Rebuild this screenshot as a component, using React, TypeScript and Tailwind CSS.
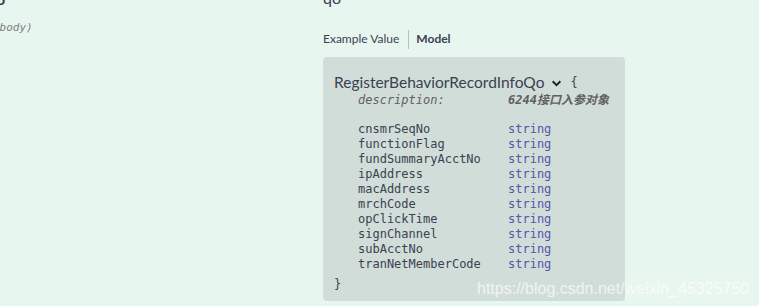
import type { FC } from 'react';

const props = [
  'cnsmrSeqNo',
  'functionFlag',
  'fundSummaryAcctNo',
  'ipAddress',
  'macAddress',
  'mrchCode',
  'opClickTime',
  'signChannel',
  'subAcctNo',
  'tranNetMemberCode',
];

const mono = "font-['DejaVu_Sans_Mono','Liberation_Mono',monospace]";

const App: FC = () => (
  <div className="relative flex h-[306px] w-[759px] overflow-hidden bg-[#e8f6f0] font-['Lato',sans-serif] text-[#3b4151]">
    {/* left: parameter name column */}
    <div className="w-[323px] shrink-0">
      <div className="-ml-[4px] -mt-[10px] flex items-start gap-[26px]">
        <span className="text-[16px] font-bold leading-[18px] text-[#3b4151]">o</span>
        <span className="-mt-[2px] text-[10px] leading-[14px] text-[#ff6060]">*</span>
      </div>
      <div className={`-ml-[7px] mt-[12px] text-[11px] italic text-[#808080] ${mono}`}>
        (body)
      </div>
    </div>

    {/* right: schema column */}
    <div className="flex flex-col">
      <div className="-mt-[11px] text-[16px] leading-[18px] text-[#3b4151]">qo</div>

      <div className="mt-[22px] flex items-center text-[12px] leading-[20px]">
        <span className="text-[#3b4151]">Example Value</span>
        <span className="ml-[9px] mr-[7px] h-[19px] w-px bg-[#b8c0c0]" />
        <span className="font-bold">Model</span>
      </div>

      <div className="mt-[8px] h-[244px] w-[302px] rounded-[4px] bg-[#d1ddd8] pl-[11px] pt-[14px]">
        <div className="flex items-center">
          <span className="text-[15.5px] leading-[22px] text-[#3b4151]">RegisterBehaviorRecordInfoQo</span>
          <svg className="ml-[7px] mt-[2px]" width="11" height="11" viewBox="0 0 20 20">
            <path d="M3 6l7 7 7-7" fill="none" stroke="#222" strokeWidth="3.6" />
          </svg>
          <span className={`ml-[8px] text-[12px] text-[#3b4151] ${mono}`}>{'{'}</span>
        </div>
        <div className={`ml-[24px] flex text-[12px] italic leading-[15px] text-[#606060] ${mono}`}>
          <span className="w-[150px]">description:</span>
          <span className="font-['DejaVu_Sans_Mono','Noto_Sans_CJK_SC',monospace] font-semibold">6244接口入参对象</span>
        </div>
        <div className={`ml-[24px] mt-[14px] text-[12px] leading-[15px] ${mono}`}>
          {props.map((p) => (
            <div key={p} className="flex">
              <span className="w-[150px] text-[#3b4151]">{p}</span>
              <span className="text-[#5555aa]">string</span>
            </div>
          ))}
        </div>
        <div className={`mt-[5px] text-[12px] leading-[15px] text-[#3b4151] ${mono}`}>{'}'}</div>
      </div>
    </div>

    {/* csdn watermark */}
    <div className="absolute left-[477px] top-[278px] font-['Liberation_Sans',Arial,sans-serif] text-[16px] leading-[21px] text-white/70">
      https://blog.csdn.net/weixin_45325750
    </div>
  </div>
);

export default App;
